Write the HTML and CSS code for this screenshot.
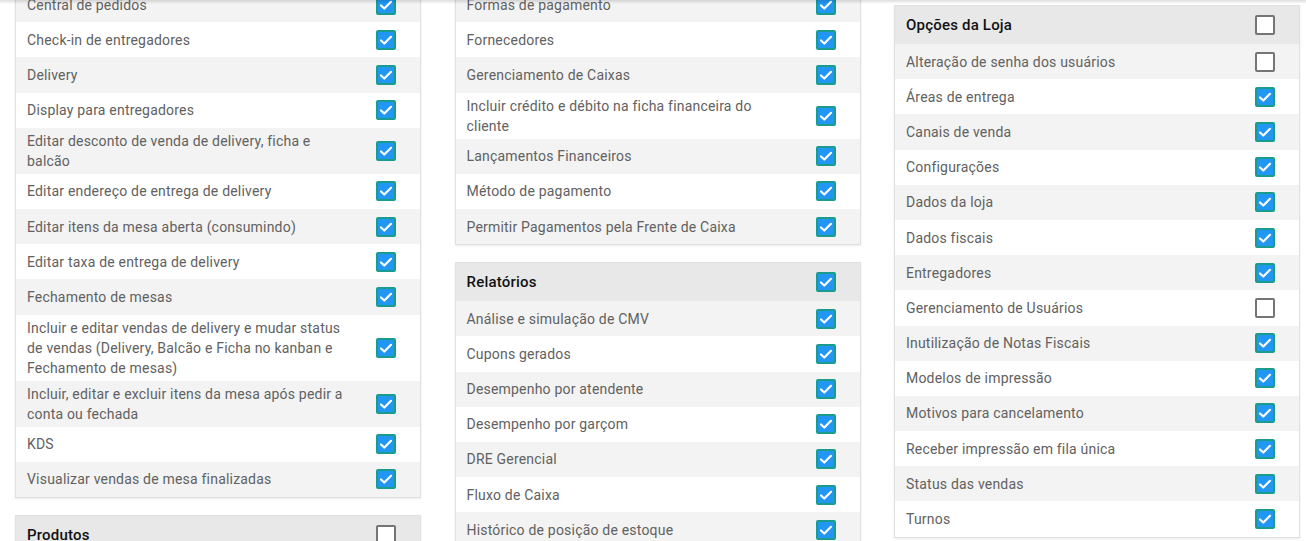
FILE: index.html
```html
<!DOCTYPE html>
<html lang="pt-BR">
  <head>
    <meta charset="UTF-8" />
    <title>Permissões</title>
    <link rel="stylesheet" href="styles.css">
  </head>

  <body>
    <div class="topbar-shadow"></div>

    <div class="grid">
      <!-- coluna 1 -->
      <div class="col col-scrolled">
        <div class="card">
          <div class="row"><span class="label">Central de pedidos</span><span class="check on"><svg viewBox="0 0 16 16"><polyline points="3,8.5 6.3,11.5 13,4.8" /></svg></span></div>
          <div class="row"><span class="label">Check-in de entregadores</span><span class="check on"><svg viewBox="0 0 16 16"><polyline points="3,8.5 6.3,11.5 13,4.8" /></svg></span></div>
          <div class="row"><span class="label">Delivery</span><span class="check on"><svg viewBox="0 0 16 16"><polyline points="3,8.5 6.3,11.5 13,4.8" /></svg></span></div>
          <div class="row"><span class="label">Display para entregadores</span><span class="check on"><svg viewBox="0 0 16 16"><polyline points="3,8.5 6.3,11.5 13,4.8" /></svg></span></div>
          <div class="row"><span class="label">Editar desconto de venda de delivery, ficha e balcão</span><span class="check on"><svg viewBox="0 0 16 16"><polyline points="3,8.5 6.3,11.5 13,4.8" /></svg></span></div>
          <div class="row"><span class="label">Editar endereço de entrega de delivery</span><span class="check on"><svg viewBox="0 0 16 16"><polyline points="3,8.5 6.3,11.5 13,4.8" /></svg></span></div>
          <div class="row"><span class="label">Editar itens da mesa aberta (consumindo)</span><span class="check on"><svg viewBox="0 0 16 16"><polyline points="3,8.5 6.3,11.5 13,4.8" /></svg></span></div>
          <div class="row"><span class="label">Editar taxa de entrega de delivery</span><span class="check on"><svg viewBox="0 0 16 16"><polyline points="3,8.5 6.3,11.5 13,4.8" /></svg></span></div>
          <div class="row"><span class="label">Fechamento de mesas</span><span class="check on"><svg viewBox="0 0 16 16"><polyline points="3,8.5 6.3,11.5 13,4.8" /></svg></span></div>
          <div class="row"><span class="label">Incluir e editar vendas de delivery e mudar status de vendas (Delivery, Balcão e Ficha no kanban e Fechamento de mesas)</span><span class="check on"><svg viewBox="0 0 16 16"><polyline points="3,8.5 6.3,11.5 13,4.8" /></svg></span></div>
          <div class="row"><span class="label">Incluir, editar e excluir itens da mesa após pedir a conta ou fechada</span><span class="check on"><svg viewBox="0 0 16 16"><polyline points="3,8.5 6.3,11.5 13,4.8" /></svg></span></div>
          <div class="row"><span class="label">KDS</span><span class="check on"><svg viewBox="0 0 16 16"><polyline points="3,8.5 6.3,11.5 13,4.8" /></svg></span></div>
          <div class="row"><span class="label">Visualizar vendas de mesa finalizadas</span><span class="check on"><svg viewBox="0 0 16 16"><polyline points="3,8.5 6.3,11.5 13,4.8" /></svg></span></div>
        </div>

        <div class="card">
          <div class="head"><span class="label">Produtos</span><span class="check"></span></div>
        </div>
      </div>

      <!-- coluna 2 -->
      <div class="col col-scrolled">
        <div class="card">
          <div class="row"><span class="label">Formas de pagamento</span><span class="check on"><svg viewBox="0 0 16 16"><polyline points="3,8.5 6.3,11.5 13,4.8" /></svg></span></div>
          <div class="row"><span class="label">Fornecedores</span><span class="check on"><svg viewBox="0 0 16 16"><polyline points="3,8.5 6.3,11.5 13,4.8" /></svg></span></div>
          <div class="row"><span class="label">Gerenciamento de Caixas</span><span class="check on"><svg viewBox="0 0 16 16"><polyline points="3,8.5 6.3,11.5 13,4.8" /></svg></span></div>
          <div class="row"><span class="label">Incluir crédito e débito na ficha financeira do cliente</span><span class="check on"><svg viewBox="0 0 16 16"><polyline points="3,8.5 6.3,11.5 13,4.8" /></svg></span></div>
          <div class="row"><span class="label">Lançamentos Financeiros</span><span class="check on"><svg viewBox="0 0 16 16"><polyline points="3,8.5 6.3,11.5 13,4.8" /></svg></span></div>
          <div class="row"><span class="label">Método de pagamento</span><span class="check on"><svg viewBox="0 0 16 16"><polyline points="3,8.5 6.3,11.5 13,4.8" /></svg></span></div>
          <div class="row"><span class="label">Permitir Pagamentos pela Frente de Caixa</span><span class="check on"><svg viewBox="0 0 16 16"><polyline points="3,8.5 6.3,11.5 13,4.8" /></svg></span></div>
        </div>

        <div class="card">
          <div class="head"><span class="label">Relatórios</span><span class="check on"><svg viewBox="0 0 16 16"><polyline points="3,8.5 6.3,11.5 13,4.8" /></svg></span></div>
          <div class="row"><span class="label">Análise e simulação de CMV</span><span class="check on"><svg viewBox="0 0 16 16"><polyline points="3,8.5 6.3,11.5 13,4.8" /></svg></span></div>
          <div class="row"><span class="label">Cupons gerados</span><span class="check on"><svg viewBox="0 0 16 16"><polyline points="3,8.5 6.3,11.5 13,4.8" /></svg></span></div>
          <div class="row"><span class="label">Desempenho por atendente</span><span class="check on"><svg viewBox="0 0 16 16"><polyline points="3,8.5 6.3,11.5 13,4.8" /></svg></span></div>
          <div class="row"><span class="label">Desempenho por garçom</span><span class="check on"><svg viewBox="0 0 16 16"><polyline points="3,8.5 6.3,11.5 13,4.8" /></svg></span></div>
          <div class="row"><span class="label">DRE Gerencial</span><span class="check on"><svg viewBox="0 0 16 16"><polyline points="3,8.5 6.3,11.5 13,4.8" /></svg></span></div>
          <div class="row"><span class="label">Fluxo de Caixa</span><span class="check on"><svg viewBox="0 0 16 16"><polyline points="3,8.5 6.3,11.5 13,4.8" /></svg></span></div>
          <div class="row"><span class="label">Histórico de posição de estoque</span><span class="check on"><svg viewBox="0 0 16 16"><polyline points="3,8.5 6.3,11.5 13,4.8" /></svg></span></div>
        </div>
      </div>

      <!-- coluna 3 -->
      <div class="col">
        <div class="card">
          <div class="head"><span class="label">Opções da Loja</span><span class="check"></span></div>
          <div class="row"><span class="label">Alteração de senha dos usuários</span><span class="check"></span></div>
          <div class="row"><span class="label">Áreas de entrega</span><span class="check on"><svg viewBox="0 0 16 16"><polyline points="3,8.5 6.3,11.5 13,4.8" /></svg></span></div>
          <div class="row"><span class="label">Canais de venda</span><span class="check on"><svg viewBox="0 0 16 16"><polyline points="3,8.5 6.3,11.5 13,4.8" /></svg></span></div>
          <div class="row"><span class="label">Configurações</span><span class="check on"><svg viewBox="0 0 16 16"><polyline points="3,8.5 6.3,11.5 13,4.8" /></svg></span></div>
          <div class="row"><span class="label">Dados da loja</span><span class="check on"><svg viewBox="0 0 16 16"><polyline points="3,8.5 6.3,11.5 13,4.8" /></svg></span></div>
          <div class="row"><span class="label">Dados fiscais</span><span class="check on"><svg viewBox="0 0 16 16"><polyline points="3,8.5 6.3,11.5 13,4.8" /></svg></span></div>
          <div class="row"><span class="label">Entregadores</span><span class="check on"><svg viewBox="0 0 16 16"><polyline points="3,8.5 6.3,11.5 13,4.8" /></svg></span></div>
          <div class="row"><span class="label">Gerenciamento de Usuários</span><span class="check"></span></div>
          <div class="row"><span class="label">Inutilização de Notas Fiscais</span><span class="check on"><svg viewBox="0 0 16 16"><polyline points="3,8.5 6.3,11.5 13,4.8" /></svg></span></div>
          <div class="row"><span class="label">Modelos de impressão</span><span class="check on"><svg viewBox="0 0 16 16"><polyline points="3,8.5 6.3,11.5 13,4.8" /></svg></span></div>
          <div class="row"><span class="label">Motivos para cancelamento</span><span class="check on"><svg viewBox="0 0 16 16"><polyline points="3,8.5 6.3,11.5 13,4.8" /></svg></span></div>
          <div class="row"><span class="label">Receber impressão em fila única</span><span class="check on"><svg viewBox="0 0 16 16"><polyline points="3,8.5 6.3,11.5 13,4.8" /></svg></span></div>
          <div class="row"><span class="label">Status das vendas</span><span class="check on"><svg viewBox="0 0 16 16"><polyline points="3,8.5 6.3,11.5 13,4.8" /></svg></span></div>
          <div class="row"><span class="label">Turnos</span><span class="check on"><svg viewBox="0 0 16 16"><polyline points="3,8.5 6.3,11.5 13,4.8" /></svg></span></div>
        </div>
      </div>
    </div>
  </body>
</html>
```

FILE: styles.css
```css
html,
body {
  margin: 0;
  padding: 0;
  height: 100%;
  overflow: hidden;
  background-color: #fff;
  font-family: Roboto, "Liberation Sans", sans-serif;
}

/* sombra da barra fixa do topo */
.topbar-shadow {
  position: fixed;
  top: 0;
  left: 0;
  right: 0;
  height: 4px;
  background: linear-gradient(rgba(0, 0, 0, 0.13), rgba(0, 0, 0, 0));
  z-index: 10;
}

.grid {
  display: grid;
  grid-template-columns: 406px 406px 406px;
  column-gap: 33.5px;
  align-items: start;
  padding: 5px 0 0 15px;
}

.col {
  display: flex;
  flex-direction: column;
  gap: 17px;
}

/* colunas 1 e 2 estão roladas para cima */
.col-scrolled {
  margin-top: -19px;
}

.card {
  border: 1px solid #e0e0e0;
  box-shadow: 0 1px 2px rgba(0, 0, 0, 0.08);
  background-color: #fff;
}

.row,
.head {
  display: flex;
  align-items: center;
  justify-content: space-between;
  box-sizing: border-box;
  min-height: 35.2px;
  padding: 3px 24px 3px 11px;
}

.row:nth-child(odd) {
  background-color: #f3f3f3;
}

.head {
  min-height: 38px;
  background-color: #e8e8e8;
}

.head ~ .row:nth-child(odd) {
  background-color: #fff;
}

.head ~ .row:nth-child(even) {
  background-color: #f3f3f3;
}

.label {
  flex: 0 1 322px;
  font-size: 14px;
  line-height: 20px;
  letter-spacing: 0.2px;
  color: #616161;
}

.head .label {
  font-size: 15px;
  font-weight: 500;
  color: #111;
}

.check {
  flex: none;
  display: block;
  width: 20px;
  height: 20px;
  box-sizing: border-box;
  border: 2px solid #757575;
  border-radius: 2px;
  background-color: #fff;
}

.check.on {
  border-color: #1a9c8c;
  background-color: #2196f3;
}

.check svg {
  display: block;
  width: 16px;
  height: 16px;
}

.check polyline {
  fill: none;
  stroke: #fff;
  stroke-width: 2.2;
  stroke-linecap: round;
  stroke-linejoin: round;
}
```
